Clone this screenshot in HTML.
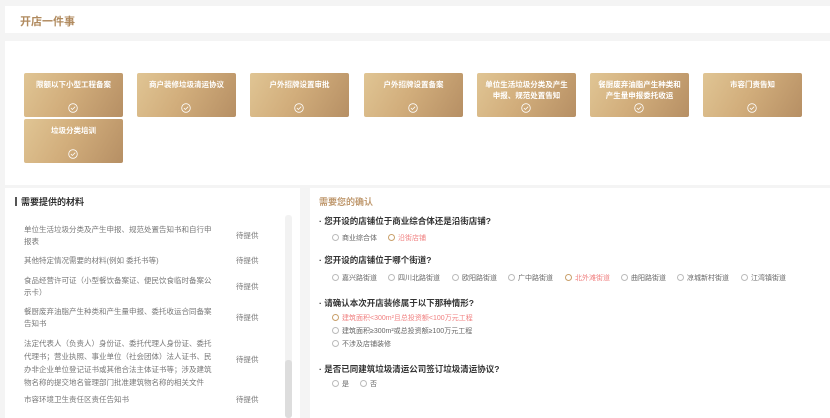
<!DOCTYPE html>
<html><head><meta charset="utf-8"><style>
*{margin:0;padding:0;box-sizing:border-box}
body{width:830px;height:410px;background:#f4f4f4;font-family:"Liberation Sans","Noto Sans CJK SC",sans-serif;position:relative;overflow:hidden}
.abs{position:absolute}
.hdr{left:5px;top:6px;width:825px;height:27px;background:#fff}
.hdr span{position:absolute;left:15px;top:7px;font-size:11px;font-weight:bold;color:#b08a5e}
.top{left:5px;top:41px;width:825px;height:144px;background:#fff}
.card{position:absolute;width:99px;height:44px;border-radius:2px;background:linear-gradient(120deg,#e0c594 0%,#d2ae7c 45%,#b68f64 100%);color:#fff;font-size:7.5px;font-weight:bold;text-align:center;line-height:11px;padding-top:6px}
.card svg{position:absolute;left:44px;bottom:4px}
.lp{left:5px;top:188px;width:295px;height:230px;background:#fff}
.rp{left:310px;top:188px;width:520px;height:230px;background:#fff}
.row{position:absolute;left:19px;width:200px;font-size:7.5px;line-height:12px;color:#777;white-space:nowrap}
.st{position:absolute;left:231px;font-size:7.5px;color:#777}
.q{position:absolute;left:9px;font-size:8.5px;font-weight:bold;color:#333}
.o{position:absolute;font-size:7px;color:#666;white-space:nowrap}
.o:before{content:"";display:inline-block;width:5px;height:5px;border:1px solid #bbb;border-radius:50%;margin-right:3px;vertical-align:-0.5px}
.o.s{color:#f08080}
.o.s:before{border:1.5px solid #c9a06b}
</style></head><body>
<svg width="0" height="0" style="position:absolute"><defs><symbol id="ck" viewBox="0 0 10 10"><circle cx="5" cy="5" r="4.3" fill="none" stroke="#fff" stroke-width="0.8"/><path d="M2.9 5.1 L4.4 6.5 L7.2 3.7" fill="none" stroke="#fff" stroke-width="0.8"/></symbol></defs></svg>
<div class="abs hdr"><span>开店一件事</span></div>
<div class="abs top">
<div class="card" style="left:19px;top:32px">限额以下小型工程备案<svg width="10" height="10"><use href="#ck"/></svg></div>
<div class="card" style="left:132px;top:32px">商户装修垃圾清运协议<svg width="10" height="10"><use href="#ck"/></svg></div>
<div class="card" style="left:245px;top:32px">户外招牌设置审批<svg width="10" height="10"><use href="#ck"/></svg></div>
<div class="card" style="left:359px;top:32px">户外招牌设置备案<svg width="10" height="10"><use href="#ck"/></svg></div>
<div class="card" style="left:472px;top:32px">单位生活垃圾分类及产生<br>申报、规范处置告知<svg width="10" height="10"><use href="#ck"/></svg></div>
<div class="card" style="left:585px;top:32px">餐厨废弃油脂产生种类和<br>产生量申报委托收运<svg width="10" height="10"><use href="#ck"/></svg></div>
<div class="card" style="left:698px;top:32px">市容门责告知<svg width="10" height="10"><use href="#ck"/></svg></div>
<div class="card" style="left:19px;top:78px">垃圾分类培训<svg width="10" height="10"><use href="#ck"/></svg></div>
</div>
<div class="abs lp">
<div style="position:absolute;left:10px;top:9px;width:1.5px;height:9px;background:#555"></div>
<div style="position:absolute;left:16px;top:7px;font-size:9px;font-weight:bold;color:#333">需要提供的材料</div>
<div class="row" style="top:36px">单位生活垃圾分类及产生申报、规范处置告知书和自行申<br>报表</div><div class="st" style="top:42px">待提供</div>
<div class="row" style="top:67px">其他特定情况需要的材料(例如 委托书等)</div><div class="st" style="top:67px">待提供</div>
<div class="row" style="top:87px">食品经营许可证（小型餐饮备案证、便民饮食临时备案公<br>示卡）</div><div class="st" style="top:93px">待提供</div>
<div class="row" style="top:118px">餐厨废弃油脂产生种类和产生量申报、委托收运合同备案<br>告知书</div><div class="st" style="top:124px">待提供</div>
<div class="row" style="top:149px;line-height:13px">法定代表人（负责人）身份证、委托代理人身份证、委托<br>代理书；营业执照、事业单位（社会团体）法人证书、民<br>办非企业单位登记证书或其他合法主体证书等；涉及建筑<br>物名称的提交地名管理部门批准建筑物名称的相关文件</div><div class="st" style="top:166px">待提供</div>
<div class="row" style="top:206px">市容环境卫生责任区责任告知书</div><div class="st" style="top:206px">待提供</div>
<div style="position:absolute;left:280px;top:27px;width:7px;height:203px;background:#f2f2f2;border-radius:3px"></div>
<div style="position:absolute;left:280px;top:172px;width:7px;height:58px;background:#ddd;border-radius:3px"></div>
</div>
<div class="abs rp">
<div style="position:absolute;left:9px;top:7px;font-size:9px;font-weight:bold;color:#c09a70">需要您的确认</div>
<div class="q" style="top:27px">· 您开设的店铺位于商业综合体还是沿街店铺?</div>
<div class="o" style="left:22px;top:45px">商业综合体</div><div class="o s" style="left:78px;top:45px">沿街店铺</div>
<div class="q" style="top:66px">· 您开设的店铺位于哪个街道?</div>
<div class="o" style="left:22px;top:85px">嘉兴路街道</div><div class="o" style="left:78px;top:85px">四川北路街道</div><div class="o" style="left:142px;top:85px">欧阳路街道</div><div class="o" style="left:198px;top:85px">广中路街道</div><div class="o s" style="left:255px;top:85px">北外滩街道</div><div class="o" style="left:311px;top:85px">曲阳路街道</div><div class="o" style="left:367px;top:85px">凉城新村街道</div><div class="o" style="left:431px;top:85px">江湾镇街道</div>
<div class="q" style="top:109px">· 请确认本次开店装修属于以下那种情形?</div>
<div class="o s" style="left:22px;top:125px">建筑面积&lt;300m²且总投资额&lt;100万元工程</div>
<div class="o" style="left:22px;top:138px">建筑面积≥300m²或总投资额≥100万元工程</div>
<div class="o" style="left:22px;top:151px">不涉及店铺装修</div>
<div class="q" style="top:175px">· 是否已同建筑垃圾清运公司签订垃圾清运协议?</div>
<div class="o" style="left:22px;top:191px">是</div><div class="o" style="left:50px;top:191px">否</div>
</div>
</body></html>
